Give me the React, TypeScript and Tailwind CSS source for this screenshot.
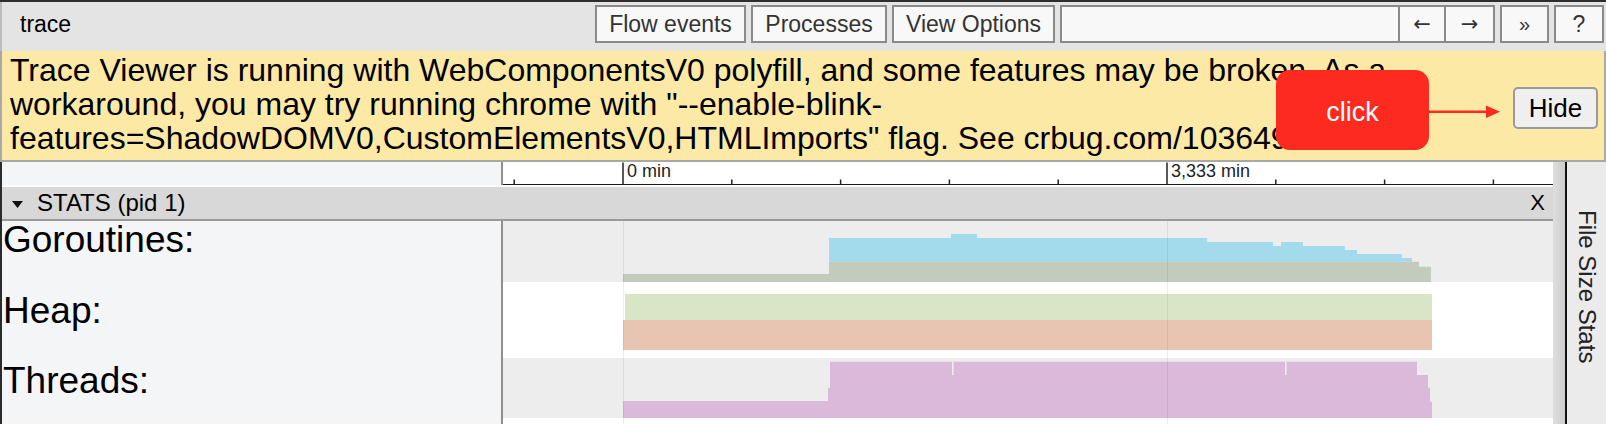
import React from 'react';

const TICK_STEP = 108.8;
const TICK_ORIGIN = 120;

const ticks = Array.from({ length: 10 }, (_, i) => ({
  x: TICK_ORIGIN + (i - 1) * TICK_STEP,
  major: i === 1 || i === 6,
}));

const HeaderButton = ({ label, width, className = '' }: { label: string; width: string; className?: string }) => (
  <div
    className={`${width} h-[38px] border-2 border-[#8a8a8a] bg-[#f8f8f8] text-[23px] text-[#333] leading-none flex items-center justify-center ${className}`}
  >
    {label}
  </div>
);

const Gridlines = ({ height }: { height: number }) => (
  <>
    <rect x={120} y={0} width={1} height={height} fill="rgba(0,0,0,0.07)" />
    <rect x={664} y={0} width={1} height={height} fill="rgba(0,0,0,0.07)" />
  </>
);

const GoroutinesChart = () => (
  <svg width="1050" height="69" className="block">
    <rect x={0} y={0} width={1050} height={61} fill="#ededed" />
    <polygon
      fill="#a3dbec"
      points="326,40.7 326,17 448,17 448,13 474,13 474,17 704,17 704,21 770,21 770,25 778,25 778,21 800,21 800,25 842,25 842,29 854,29 854,33 899,33 899,37 909,37 909,40.7"
    />
    <polygon fill="#c3cbbc" points="120,61 120,53 326,53 326,40.7 916,40.7 916,45.7 928,45.7 928,61" />
    <Gridlines height={69} />
  </svg>
);

const HeapChart = () => (
  <svg width="1050" height="68" className="block">
    <rect x={122} y={4} width={807} height={26} fill="#d9e6c6" />
    <rect x={120} y={30} width={809} height={30} fill="#e8c4b3" />
    <Gridlines height={68} />
  </svg>
);

const ThreadsChart = () => (
  <svg width="1050" height="66" className="block">
    <rect x={0} y={0} width={1050} height={60} fill="#ededed" />
    <polygon
      fill="#dbb9da"
      points="120,60 120,43 325,43 325,30 327,30 327,3.7 914,3.7 914,17 925,17 925,29.7 927,29.7 927,43.7 929,43.7 929,60"
    />
    <rect x={449} y={3.7} width={1.6} height={13.3} fill="#ededed" />
    <rect x={782} y={3.7} width={1.6} height={13.3} fill="#ededed" />
    <Gridlines height={66} />
  </svg>
);

const tracks = [
  { label: 'Goroutines:', chart: <GoroutinesChart />, height: 'h-[69px]', pad: 'pt-0' },
  { label: 'Heap:', chart: <HeapChart />, height: 'h-[68px]', pad: 'pt-[2px]' },
  { label: 'Threads:', chart: <ThreadsChart />, height: 'h-[66px]', pad: 'pt-[4px]' },
];

export default function App() {
  return (
    <div className="relative w-[1606px] h-[424px] overflow-hidden bg-white text-black font-['Liberation_Sans','DejaVu_Sans',sans-serif]">
      <div className="h-[2px] bg-[#2e2e2e]" />

      {/* Toolbar */}
      <div className="h-[49px] bg-[#e4e4e4] border-l-2 border-[#bdbdbd] flex items-start pt-[3px]">
        <div className="pl-[18px] h-[38px] leading-[38px] text-[23px]">trace</div>
        <div className="ml-auto flex gap-[5px] pr-[2px]">
          <HeaderButton label="Flow events" width="w-[151px]" />
          <HeaderButton label="Processes" width="w-[136px]" />
          <HeaderButton label="View Options" width="w-[163px]" />
          <div className="flex">
            <div className="w-[340px] h-[38px] border-2 border-[#8a8a8a] bg-[#f8f8f8]" />
            <HeaderButton label="←" width="w-[46px]" className="border-l-0 font-['DejaVu_Sans',sans-serif] !text-[21px]" />
            <HeaderButton label="→" width="w-[49px]" className="border-l-0 font-['DejaVu_Sans',sans-serif] !text-[21px]" />
          </div>
          <HeaderButton label="»" width="w-[49px]" className="!text-[20px]" />
          <HeaderButton label="?" width="w-[50px]" />
        </div>
      </div>

      {/* Warning banner */}
      <div className="h-[111px] bg-[#fde9a6] border-l-2 border-r-2 border-b-2 border-[#a8a8a8] flex items-start">
        <div className="flex-1 pl-[8px] pt-[2px] text-[32px] leading-[34px]">
          Trace Viewer is running with WebComponentsV0 polyfill, and some features may be broken. As a workaround,
          you may try running chrome with "--enable-blink-features=ShadowDOMV0,CustomElementsV0,HTMLImports" flag.
          See crbug.com/1036492.
        </div>
        <button className="mt-[36px] mr-[6px] w-[85px] h-[42px] rounded-[5px] border-2 border-[#9a9a9a] bg-[#efefef] text-[26px] leading-none text-black">
          Hide
        </button>
      </div>

      <div className="flex h-[262px]">
        {/* Timeline */}
        <div className="w-[1553px] border-l-2 border-[#2b2b2b] flex flex-col">
          <div className="flex h-[23px]">
            <div className="w-[501px] shrink-0 bg-[#f4f5f7] border-r-2 border-[#8f8f8f]" />
            <div className="relative flex-1 bg-white border-b border-[#1a1a1a]">
              <svg width="1050" height="23" className="absolute left-0 top-0">
                {ticks.map((t) => (
                  <rect
                    key={t.x}
                    x={t.x - 0.75}
                    y={t.major ? 0.5 : 17.5}
                    width={1.5}
                    height={t.major ? 22 : 5}
                    fill="#222"
                  />
                ))}
              </svg>
              <span className="absolute left-[124px] top-0 text-[18px] leading-[18px] text-[#222]">0 min</span>
              <span className="absolute left-[668px] top-0 text-[18px] leading-[18px] text-[#222]">3,333 min</span>
            </div>
          </div>
          <div className="h-[2px] bg-white" />
          <div className="h-[34px] bg-[#d8d8d8] border-b-2 border-[#9a9a9a] flex items-center">
            <svg width="11" height="7" className="ml-[10px] mt-[2px]">
              <polygon points="0,0 11,0 5.5,7" fill="#111" />
            </svg>
            <span className="ml-[14px] text-[24px] leading-none">STATS (pid 1)</span>
            <span className="ml-auto mr-[8px] text-[22px] leading-none">X</span>
          </div>
          {tracks.map((track) => (
            <div key={track.label} className={`flex ${track.height}`}>
              <div
                className={`w-[501px] shrink-0 bg-[#f4f5f7] border-r-2 border-[#8f8f8f] pl-[1px] text-[37px] leading-[37px] ${track.pad}`}
              >
                {track.label}
              </div>
              <div className="flex-1 bg-white">{track.chart}</div>
            </div>
          ))}
        </div>

        {/* Side panel */}
        <div className="flex-1 flex">
          <div className="w-[12px] bg-gradient-to-r from-[#dedede] to-[#cdcdcd]" />
          <div className="w-[2px] bg-[#111]" />
          <div className="flex-1 bg-[#ebebeb] flex justify-center pt-[48px]">
            <span className="[writing-mode:vertical-rl] text-[24px] leading-none text-[#222]">File Size Stats</span>
          </div>
        </div>
      </div>

      {/* Annotation */}
      <div className="absolute left-[1276px] top-[70px] w-[153px] h-[80px] rounded-[14px] bg-[#fd2b1f] text-white text-[27px] flex items-center justify-center pt-[4px]">
        click
      </div>
      <svg width="72" height="16" className="absolute left-[1429px] top-[104px]">
        <rect x={0} y={6.5} width={58} height={2.5} fill="#fd2b1f" />
        <polygon points="57,1.5 71,7.75 57,14" fill="#fd2b1f" />
      </svg>
    </div>
  );
}
